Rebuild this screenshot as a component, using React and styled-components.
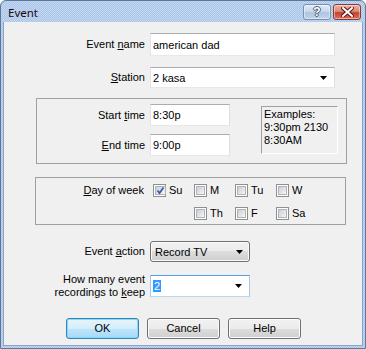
import React from "react";
import styled, { createGlobalStyle } from "styled-components";

const Global = createGlobalStyle`
  html, body { margin: 0; padding: 0; background: #ffffff; }
  body { font-family: "Liberation Sans", Arial, sans-serif; font-size: 11px; color: #000; }
  * { box-sizing: border-box; }
`;

const Window = styled.div`
  width: 366px;
  height: 349px;
  border: 1px solid #5d7899;
  border-radius: 6px 6px 0 0;
  background: repeating-conic-gradient(#a7c3e7 0 25%, #c6d9f0 0 50%) 0 0 / 2px 2px;
  padding: 0 2px 2px 2px;
  display: flex;
  flex-direction: column;
`;

const TitleBar = styled.div`
  height: 21px;
  display: flex;
  align-items: flex-start;
  flex-shrink: 0;
`;

const Title = styled.div`
  font-family: "Noto Sans", "Open Sans", sans-serif;
  font-size: 11.5px;
  line-height: 16px;
  margin: 4px 0 0 5px;
  color: #1a0a0a;
`;

const CaptionButtons = styled.div`
  margin: 3px 2px 0 auto;
  display: flex;
  gap: 2px;
`;

const CaptionButton = styled.div`
  width: 28px;
  height: 16px;
  border-radius: 3px;
  border: 1px solid ${(p) => (p.$close ? "#8a3a30" : "#7890ad")};
  background: ${(p) =>
    p.$close
      ? "linear-gradient(#eab0a5 0%, #dc8a7a 45%, #c8412c 55%, #d9705c 100%)"
      : "linear-gradient(#e0ebf7 0%, #c8d8ec 45%, #afc4df 55%, #c2d4ea 100%)"};
  box-shadow: inset 0 0 0 1px rgba(255, 255, 255, 0.45);
  display: flex;
  align-items: center;
  justify-content: center;
`;

const Client = styled.div`
  flex: 1;
  background: #f0f0f0;
  border: 1px solid #8aa4c4;
  border-top: none;
  display: flex;
  flex-direction: column;
`;

const FieldRow = styled.div`
  display: flex;
  align-items: center;
  margin-top: ${(p) => p.$mt}px;
  margin-left: ${(p) => p.$ml || 0}px;
  height: ${(p) => p.$h}px;
  flex-shrink: 0;
`;

const Label = styled.div`
  width: ${(p) => p.$w}px;
  text-align: right;
  margin-right: ${(p) => (p.$gap === undefined ? 5 : p.$gap)}px;
  line-height: 13px;
  flex-shrink: 0;
  white-space: nowrap;
`;

const TextBox = styled.div`
  width: ${(p) => p.$w}px;
  height: ${(p) => p.$h}px;
  background: #fff;
  border: 1px solid;
  border-color: #abadb3 #dbdfe6 #e3e9ef #e2e3ea;
  ${(p) => p.$focus && "border-color: #569de5 #a4c8ef #b9d6f4 #a4c8ef;"}
  padding: 0 7px 0 2px;
  display: flex;
  align-items: center;
  white-space: nowrap;
`;

const ComboButton = styled.div`
  width: ${(p) => p.$w}px;
  height: ${(p) => p.$h}px;
  border: 1px solid #707070;
  border-radius: 3px;
  background: linear-gradient(#f2f2f2 0%, #ebebeb 50%, #dddddd 50%, #cfcfcf 100%);
  box-shadow: inset 0 0 0 1px #fbfbfb;
  padding: 0 6px 0 4px;
  display: flex;
  align-items: center;
  white-space: nowrap;
`;

const Grow = styled.span`
  flex: 1;
`;

const Selected = styled.span`
  background: #3399ff;
  color: #fff;
  padding: 0 1px;
  line-height: 14px;
`;

const Group = styled.div`
  margin-top: ${(p) => p.$mt}px;
  margin-left: ${(p) => p.$ml}px;
  width: 311px;
  height: ${(p) => p.$h}px;
  border: 1px solid #a0a0a0;
  flex-shrink: 0;
`;

const TimeGroupInner = styled.div`
  display: flex;
  align-items: flex-start;
  padding: 5px 0 0 0;
`;

const TimeFields = styled.div`
  display: flex;
  flex-direction: column;
  gap: 8px;
`;

const Examples = styled.div`
  margin: 2px 0 0 31px;
  width: 77px;
  height: 48px;
  border: 1px solid;
  border-color: #a0a0a0 #ffffff #ffffff #a0a0a0;
  padding: 1px 2px;
  line-height: 13px;
`;

const DayGrid = styled.div`
  display: grid;
  grid-template-columns: 108px repeat(4, 41px);
  grid-auto-rows: 13px;
  row-gap: 10px;
  padding-top: 6px;
`;

const DayLabel = styled.div`
  text-align: right;
  line-height: 13px;
  white-space: nowrap;
`;

const DayCell = styled.div`
  grid-column: ${(p) => p.$col};
  padding-left: 9px;
  display: flex;
  align-items: center;
  gap: 3px;
  line-height: 13px;
`;

const Box = styled.span`
  width: 13px;
  height: 13px;
  border: 1px solid #8e8f8f;
  background: #fff;
  padding: 1px;
  display: inline-flex;
  flex-shrink: 0;
`;

const BoxInner = styled.span`
  flex: 1;
  background: linear-gradient(135deg, #cbcfd5 0%, #e4e6e8 60%, #f6f6f6 100%);
  border: 1px solid #b0b4ba;
  display: flex;
  align-items: center;
  justify-content: center;
`;

const ButtonRow = styled.div`
  display: flex;
  gap: 8px;
  margin: 21px 0 0 62px;
`;

const PushButton = styled.div`
  width: 73px;
  height: 21px;
  border-radius: 3px;
  border: 1px solid ${(p) => (p.$default ? "#3c7fb1" : "#707070")};
  background: ${(p) =>
    p.$default
      ? "linear-gradient(#e5f4fc 0%, #d4eefb 50%, #bce5fc 50%, #a7d9f5 100%)"
      : "linear-gradient(#f2f2f2 0%, #ebebeb 50%, #dddddd 50%, #cfcfcf 100%)"};
  box-shadow: inset 0 0 0 1px ${(p) => (p.$default ? "#7fdcfb" : "#fcfcfc")};
  display: flex;
  align-items: center;
  justify-content: center;
  line-height: 13px;
`;

const Arrow = () => (
  <svg width="7" height="4" viewBox="0 0 7 4">
    <path d="M0 0H7L3.5 4Z" fill="#000" />
  </svg>
);

const Check = () => (
  <svg width="9" height="9" viewBox="0 0 9 9">
    <path d="M1.5 4.5L3.5 7L7.5 1.5" fill="none" stroke="#3a5a9e" strokeWidth="1.7" />
  </svg>
);

const CheckBox = ({ checked, label, col }) => (
  <DayCell $col={col}>
    <Box>
      <BoxInner>{checked && <Check />}</BoxInner>
    </Box>
    <span>{label}</span>
  </DayCell>
);

const HelpGlyph = styled.span`
  font-family: "Liberation Sans", Arial, sans-serif;
  font-weight: bold;
  font-size: 12px;
  line-height: 12px;
  color: #fff;
  text-shadow: -1px 0 #4a5b72, 1px 0 #4a5b72, 0 -1px #4a5b72, 0 1px #4a5b72;
`;

export default function App() {
  return (
    <>
      <Global />
      <Window>
        <TitleBar>
          <Title>Event</Title>
          <CaptionButtons>
            <CaptionButton>
              <HelpGlyph>?</HelpGlyph>
            </CaptionButton>
            <CaptionButton $close>
              <svg width="13" height="10" viewBox="0 0 13 10">
                <path d="M2 1L11 9M11 1L2 9" stroke="#5a1a14" strokeWidth="4" strokeLinecap="square" />
                <path d="M2 1L11 9M11 1L2 9" stroke="#ffffff" strokeWidth="2" strokeLinecap="square" />
              </svg>
            </CaptionButton>
          </CaptionButtons>
        </TitleBar>
        <Client>
          <FieldRow $mt={11} $h={23}>
            <Label $w={141}>
              Event <u>n</u>ame
            </Label>
            <TextBox $w={185} $h={23}>american dad</TextBox>
          </FieldRow>
          <FieldRow $mt={11} $h={21}>
            <Label $w={141}>
              <u>S</u>tation
            </Label>
            <TextBox $w={185} $h={21}>
              <Grow>2 kasa</Grow>
              <Arrow />
            </TextBox>
          </FieldRow>

          <Group $mt={10} $ml={32} $h={66}>
            <TimeGroupInner>
              <TimeFields>
                <FieldRow $mt={0} $h={22}>
                  <Label $w={108}>
                    Start <u>t</u>ime
                  </Label>
                  <TextBox $w={80} $h={22}>8:30p</TextBox>
                </FieldRow>
                <FieldRow $mt={0} $h={22}>
                  <Label $w={108}>
                    <u>E</u>nd time
                  </Label>
                  <TextBox $w={80} $h={22}>9:00p</TextBox>
                </FieldRow>
              </TimeFields>
              <Examples>
                Examples:
                <br />
                9:30pm 2130
                <br />
                8:30AM
              </Examples>
            </TimeGroupInner>
          </Group>

          <Group $mt={13} $ml={31} $h={48}>
            <DayGrid>
              <DayLabel>
                <u>D</u>ay of week
              </DayLabel>
              <CheckBox col={2} checked label="Su" />
              <CheckBox col={3} label="M" />
              <CheckBox col={4} label="Tu" />
              <CheckBox col={5} label="W" />
              <CheckBox col={3} label="Th" />
              <CheckBox col={4} label="F" />
              <CheckBox col={5} label="Sa" />
            </DayGrid>
          </Group>

          <FieldRow $mt={16} $h={21}>
            <Label $w={141}>
              Event <u>a</u>ction
            </Label>
            <ComboButton $w={100} $h={21}>
              <Grow>Record TV</Grow>
              <Arrow />
            </ComboButton>
          </FieldRow>
          <FieldRow $mt={13} $h={22}>
            <Label $w={141}>
              How many event
              <br />
              recordings to <u>k</u>eep
            </Label>
            <TextBox $w={100} $h={22} $focus>
              <Grow>
                <Selected>2</Selected>
              </Grow>
              <Arrow />
            </TextBox>
          </FieldRow>

          <ButtonRow>
            <PushButton $default>OK</PushButton>
            <PushButton>Cancel</PushButton>
            <PushButton>Help</PushButton>
          </ButtonRow>
        </Client>
      </Window>
    </>
  );
}
